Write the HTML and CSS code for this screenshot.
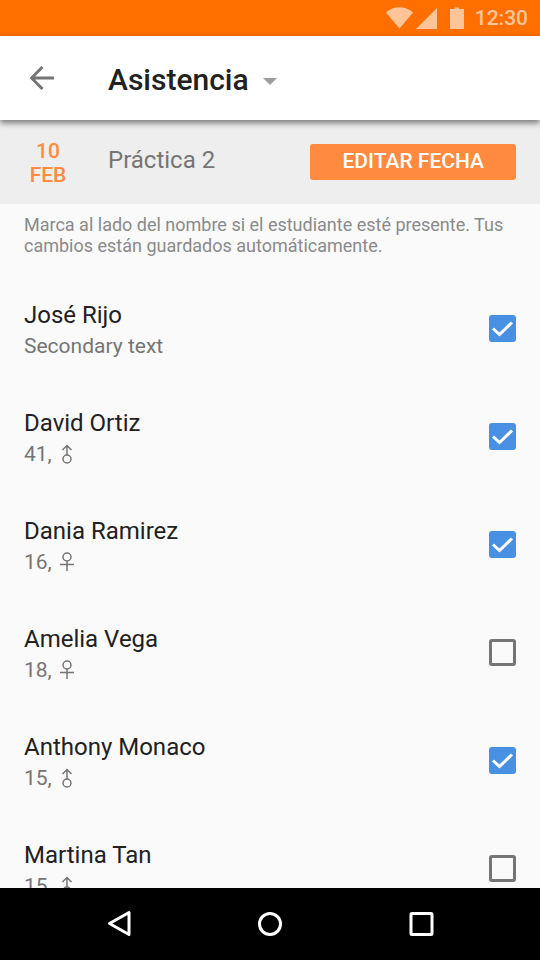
FILE: index.html
```
<!DOCTYPE html>
<html lang="es">
<head>
<meta charset="utf-8">
<meta name="viewport" content="width=device-width, initial-scale=1">
<title>Asistencia</title>
<link rel="stylesheet" href="styles.css">
</head>
<body>
<svg class="defs" aria-hidden="true">
  <symbol id="male" viewBox="0 0 14 21"><circle cx="7" cy="15" r="4"/><path d="M7 11V2M2.500 6L7 1.500 11.500 6"/></symbol>
  <symbol id="female" viewBox="0 0 14 21"><circle cx="7" cy="5" r="4"/><path d="M7 9v10M0 12.500h14"/></symbol>
  <symbol id="tick" viewBox="0 0 27 27"><path d="M4 13.500l6.500 6L23 7.500"/></symbol>
</svg>

<div class="status">
  <svg class="status-icons" width="80" height="36" viewBox="0 0 80 36" aria-hidden="true">
    <path d="M0 12.500C7.500 5.500 19 5.500 27 12.500L13.500 28.500z"/>
    <path d="M30 29L51 8v21z"/>
    <path d="M64 9h4.500V7.500h4.500V9H78v20H64z"/>
  </svg>
  <span>12:30</span>
</div>

<header class="appbar">
  <button class="back" type="button" aria-label="Atrás">
    <svg width="24" height="24" viewBox="0 0 24 24"><path d="M24 12H2M12.500 1L1.500 12l11 11"/></svg>
  </button>
  <h1><button class="title" type="button">Asistencia
    <svg width="14" height="7" viewBox="0 0 14 7" aria-hidden="true"><path d="M0 0h14L7 7z"/></svg></button></h1>
</header>

<section class="session">
  <time class="date" datetime="02-10"><span>10</span><span>FEB</span></time>
  <h2>Práctica 2</h2>
  <button class="edit" type="button">EDITAR FECHA</button>
</section>

<main>
  <p class="hint">Marca al lado del nombre si el estudiante esté presente. Tus cambios están guardados automáticamente.</p>
  <ul class="students">
    <li><label class="student"><span class="info"><span class="name">José Rijo</span><span class="detail">Secondary text</span></span><span class="check"><input type="checkbox" checked><svg><use href="#tick"/></svg></span></label></li>
    <li><label class="student"><span class="info"><span class="name">David Ortiz</span><span class="detail">41, <svg class="gender"><use href="#male"/></svg></span></span><span class="check"><input type="checkbox" checked><svg><use href="#tick"/></svg></span></label></li>
    <li><label class="student"><span class="info"><span class="name">Dania Ramirez</span><span class="detail">16, <svg class="gender"><use href="#female"/></svg></span></span><span class="check"><input type="checkbox" checked><svg><use href="#tick"/></svg></span></label></li>
    <li><label class="student"><span class="info"><span class="name">Amelia Vega</span><span class="detail">18, <svg class="gender"><use href="#female"/></svg></span></span><span class="check"><input type="checkbox"><svg><use href="#tick"/></svg></span></label></li>
    <li><label class="student"><span class="info"><span class="name">Anthony Monaco</span><span class="detail">15, <svg class="gender"><use href="#male"/></svg></span></span><span class="check"><input type="checkbox" checked><svg><use href="#tick"/></svg></span></label></li>
    <li><label class="student"><span class="info"><span class="name">Martina Tan</span><span class="detail">15, <svg class="gender"><use href="#male"/></svg></span></span><span class="check"><input type="checkbox"><svg><use href="#tick"/></svg></span></label></li>
  </ul>
</main>

<nav class="navbar" aria-label="Sistema">
  <button type="button" aria-label="Volver"><svg viewBox="0 0 28 28"><path d="M24 2.500v22L4.500 13.500z"/></svg></button>
  <button type="button" aria-label="Inicio"><svg viewBox="0 0 28 28"><circle cx="14" cy="14" r="10.500"/></svg></button>
  <button type="button" aria-label="Recientes"><svg viewBox="0 0 28 28"><rect x="4" y="3.500" width="21" height="21" rx="1"/></svg></button>
</nav>
</body>
</html>
```
FILE: styles.css
```
* {
  box-sizing: border-box;
}

body {
  margin: 0;
  height: 100vh;
  display: flex;
  flex-direction: column;
  background: #fafafa;
  color: #212121;
  font-family: Roboto, "Liberation Sans", sans-serif;
}

button {
  border: 0;
  padding: 0;
  background: none;
  color: inherit;
  font: inherit;
  cursor: pointer;
}

h1,
h2,
p,
ul {
  margin: 0;
  padding: 0;
}

svg {
  display: block;
  fill: none;
}

.defs {
  position: absolute;
  width: 0;
  height: 0;
}

.status {
  flex: none;
  display: flex;
  justify-content: flex-end;
  align-items: center;
  gap: 9px;
  height: 36px;
  padding-right: 12px;
  background: #ff6f00;
  color: #ffc599;
  font-size: 21px;
  font-weight: 500;
  line-height: 36px;
}

.status-icons {
  fill: #ffc599;
}

.appbar {
  position: relative;
  flex: none;
  display: flex;
  align-items: center;
  height: 84px;
  padding: 0 24px;
  background: #fff;
  box-shadow: 0 3px 6px rgba(0, 0, 0, 0.5);
}

.back {
  width: 84px;
  padding-left: 6px;
}

.back svg {
  stroke: #757575;
  stroke-width: 3;
}

.title {
  display: flex;
  align-items: center;
  gap: 14px;
  padding-top: 4px;
  font-size: 30px;
  font-weight: 500;
  line-height: 36px;
}

.title svg {
  margin-top: 2px;
  fill: #9e9e9e;
}

.session {
  flex: none;
  display: flex;
  align-items: center;
  height: 84px;
  padding: 0 24px;
  background: #eee;
}

.date {
  display: flex;
  flex-direction: column;
  width: 48px;
  margin-right: 36px;
  padding-top: 2px;
  color: #ff8a40;
  font-size: 21px;
  font-weight: 500;
  line-height: 24px;
  text-align: center;
}

.session h2 {
  flex: 1;
  color: #757575;
  font-size: 24px;
  font-weight: 400;
  line-height: 32px;
  padding-bottom: 4px;
}

.edit {
  height: 36px;
  padding: 0 32px 2px;
  border-radius: 3px;
  background: #ff8a40;
  color: #fff;
  font-size: 21px;
  font-weight: 500;
  line-height: 34px;
}

main {
  flex: 1;
  min-height: 0;
  overflow: hidden;
}

.hint {
  padding: 10px 24px 18px;
  color: #8a8a8a;
  font-size: 18px;
  line-height: 21px;
}

.students {
  list-style: none;
}

.student {
  display: flex;
  justify-content: space-between;
  align-items: center;
  height: 108px;
  padding: 0 24px;
}

.info {
  display: grid;
  padding-top: 6px;
}

.name {
  font-size: 24px;
  line-height: 31px;
}

.detail {
  display: flex;
  gap: 8px;
  color: #757575;
  font-size: 21px;
  line-height: 31px;
}

.gender {
  width: 14px;
  height: 21px;
  margin-top: 5px;
  stroke: #757575;
  stroke-width: 1.5;
}

.check {
  display: grid;
}

.check input,
.check svg {
  grid-area: 1 / 1;
  width: 27px;
  height: 27px;
}

.check input {
  appearance: none;
  margin: 0;
  border: 3px solid #757575;
  border-radius: 3px;
}

.check input:checked {
  border-color: #4a90e2;
  background: #4a90e2;
}

.check svg {
  visibility: hidden;
  pointer-events: none;
  stroke: #fff;
  stroke-width: 3;
}

.check input:checked + svg {
  visibility: visible;
}

.navbar {
  flex: none;
  display: flex;
  justify-content: center;
  align-items: center;
  height: 72px;
  background: #000;
}

.navbar button {
  display: grid;
  place-items: center;
  width: 28%;
  height: 72px;
}

.navbar svg {
  width: 28px;
  height: 28px;
  stroke: #fff;
  stroke-width: 3;
  stroke-linejoin: round;
}
```
